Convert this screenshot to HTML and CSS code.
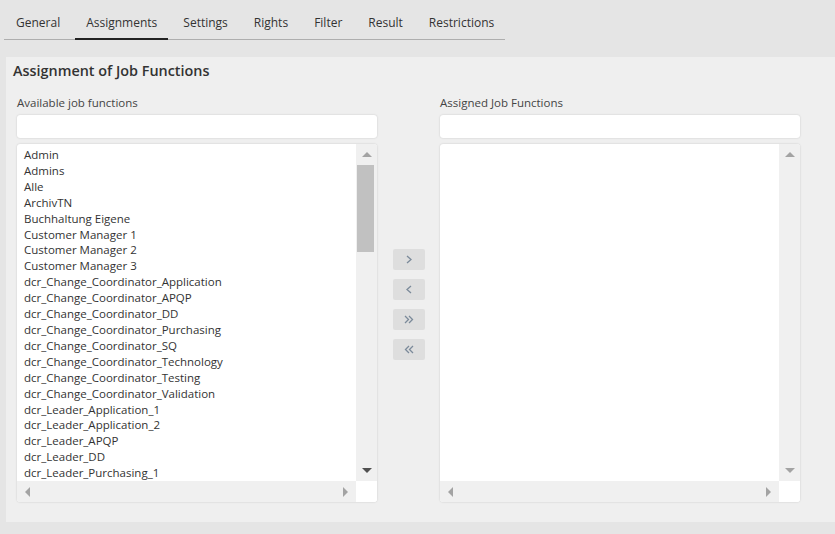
FILE: index.html
```html
<!DOCTYPE html>
<html lang="en">
<head>
  <meta charset="UTF-8">
  <title>Assignments</title>
  <link rel="stylesheet" href="styles.css">
</head>
<body>
  <nav class="tabs">
    <a class="tab">General</a>
    <a class="tab active">Assignments</a>
    <a class="tab">Settings</a>
    <a class="tab">Rights</a>
    <a class="tab">Filter</a>
    <a class="tab">Result</a>
    <a class="tab">Restrictions</a>
  </nav>

  <section class="panel">
    <h2 class="panel-title">Assignment of Job Functions</h2>
    <div class="assign">
      <div class="column">
        <label class="field-label">Available job functions</label>
        <input class="filter" type="text">
        <div class="listbox">
          <ul class="items">
            <li>Admin</li>
            <li>Admins</li>
            <li>Alle</li>
            <li>ArchivTN</li>
            <li>Buchhaltung Eigene</li>
            <li>Customer Manager 1</li>
            <li>Customer Manager 2</li>
            <li>Customer Manager 3</li>
            <li>dcr_Change_Coordinator_Application</li>
            <li>dcr_Change_Coordinator_APQP</li>
            <li>dcr_Change_Coordinator_DD</li>
            <li>dcr_Change_Coordinator_Purchasing</li>
            <li>dcr_Change_Coordinator_SQ</li>
            <li>dcr_Change_Coordinator_Technology</li>
            <li>dcr_Change_Coordinator_Testing</li>
            <li>dcr_Change_Coordinator_Validation</li>
            <li>dcr_Leader_Application_1</li>
            <li>dcr_Leader_Application_2</li>
            <li>dcr_Leader_APQP</li>
            <li>dcr_Leader_DD</li>
            <li>dcr_Leader_Purchasing_1</li>
          </ul>
          <div class="vscroll">
            <span class="btn-v"><i class="tri up"></i></span>
            <span class="thumb"></span>
            <span class="spacer"></span>
            <span class="btn-v"><i class="tri down dark"></i></span>
          </div>
          <div class="hscroll">
            <span class="btn-h"><i class="tri left"></i></span>
            <span class="btn-h"><i class="tri right"></i></span>
          </div>
          <div class="corner"></div>
        </div>
      </div>

      <div class="moves">
        <button class="move" title="Add">
          <svg width="6" height="9" viewBox="0 0 6 9"><polyline points="1,1 5,4.5 1,8"/></svg>
        </button>
        <button class="move" title="Remove">
          <svg width="6" height="9" viewBox="0 0 6 9"><polyline points="5,1 1,4.5 5,8"/></svg>
        </button>
        <button class="move" title="Add all">
          <svg width="10" height="9" viewBox="0 0 10 9"><polyline points="1,1 4.5,4.5 1,8"/><polyline points="5,1 8.5,4.5 5,8"/></svg>
        </button>
        <button class="move" title="Remove all">
          <svg width="10" height="9" viewBox="0 0 10 9"><polyline points="5,1 1.5,4.5 5,8"/><polyline points="9,1 5.5,4.5 9,8"/></svg>
        </button>
      </div>

      <div class="column">
        <label class="field-label">Assigned Job Functions</label>
        <input class="filter" type="text">
        <div class="listbox">
          <ul class="items"></ul>
          <div class="vscroll">
            <span class="btn-v"><i class="tri up"></i></span>
            <span class="spacer"></span>
            <span class="btn-v"><i class="tri down"></i></span>
          </div>
          <div class="hscroll">
            <span class="btn-h"><i class="tri left"></i></span>
            <span class="btn-h"><i class="tri right"></i></span>
          </div>
          <div class="corner"></div>
        </div>
      </div>
    </div>
  </section>
</body>
</html>
```

FILE: styles.css
```css
body {
  margin: 0;
  background: #e5e5e5;
  font-family: "Open Sans", "Liberation Sans", sans-serif;
  color: #333;
}
.tabs {
  display: flex;
  gap: 4px;
  width: 501px;
  margin-left: 4px;
  border-bottom: 1px solid #aeaeae;
}
.tab {
  padding: 14px 11px 6px;
  font-size: 12px;
  line-height: 18px;
  color: #333;
  border-bottom: 2px solid transparent;
  margin-bottom: -1px;
  cursor: pointer;
}
.tab:first-child {
  margin-left: 1px;
}
.tab.active {
  border-bottom-color: #222;
}
.panel {
  margin: 17px 0 0 6px;
  background: #efefef;
  padding: 4px 0 20px 7px;
}
.panel-title {
  margin: 0;
  font-size: 14.4px;
  line-height: 20px;
  font-weight: 600;
  color: #333;
}
.assign {
  display: flex;
  margin: 14px 0 0 4px;
}
.column {
  display: flex;
  flex-direction: column;
  width: 360px;
}
.field-label {
  font-size: 11.5px;
  line-height: 16px;
  color: #444;
}
.filter {
  box-sizing: border-box;
  height: 23px;
  margin: 4px 0 6px;
  border: none;
  border-radius: 3px;
  background: #fff;
  box-shadow: 0 0 2px rgba(0,0,0,0.18);
  font: inherit;
  font-size: 12px;
}
.listbox {
  display: grid;
  grid-template-columns: 1fr 21px;
  grid-template-rows: 1fr 21px;
  height: 358px;
  background: #fff;
  border-radius: 3px;
  box-shadow: 0 0 2px rgba(0,0,0,0.18);
  overflow: hidden;
}
.items {
  list-style: none;
  margin: 0;
  padding: 3px 0 0 7px;
  overflow: hidden;
  font-size: 11.5px;
  line-height: 15.9px;
  color: #333;
  white-space: nowrap;
}
.vscroll {
  display: flex;
  flex-direction: column;
  background: #f0f0f0;
}
.btn-v, .btn-h {
  display: flex;
  align-items: center;
  justify-content: center;
  width: 21px;
  height: 21px;
}
.thumb {
  height: 87px;
  margin: 0 3px 0 1px;
  background: #c1c1c1;
}
.spacer {
  flex: 1;
}
.hscroll {
  display: flex;
  justify-content: space-between;
  background: #f0f0f0;
}
.corner {
  background: #fff;
}
.tri {
  width: 0;
  height: 0;
}
.tri.up {
  border-left: 5px solid transparent;
  border-right: 5px solid transparent;
  border-bottom: 5px solid #a3a3a3;
}
.tri.down {
  border-left: 5px solid transparent;
  border-right: 5px solid transparent;
  border-top: 5px solid #a3a3a3;
}
.tri.down.dark {
  border-top-color: #505050;
}
.tri.left {
  border-top: 5px solid transparent;
  border-bottom: 5px solid transparent;
  border-right: 5px solid #a3a3a3;
}
.tri.right {
  border-top: 5px solid transparent;
  border-bottom: 5px solid transparent;
  border-left: 5px solid #a3a3a3;
}
.moves {
  display: flex;
  flex-direction: column;
  gap: 9px;
  width: 63px;
  padding-top: 154px;
  align-items: center;
}
.move {
  display: flex;
  align-items: center;
  justify-content: center;
  width: 32px;
  height: 21px;
  padding: 0;
  border: none;
  border-radius: 2px;
  background: #dedede;
  cursor: pointer;
}
.move polyline {
  fill: none;
  stroke: #7b8a9a;
  stroke-width: 1.3;
}
```
